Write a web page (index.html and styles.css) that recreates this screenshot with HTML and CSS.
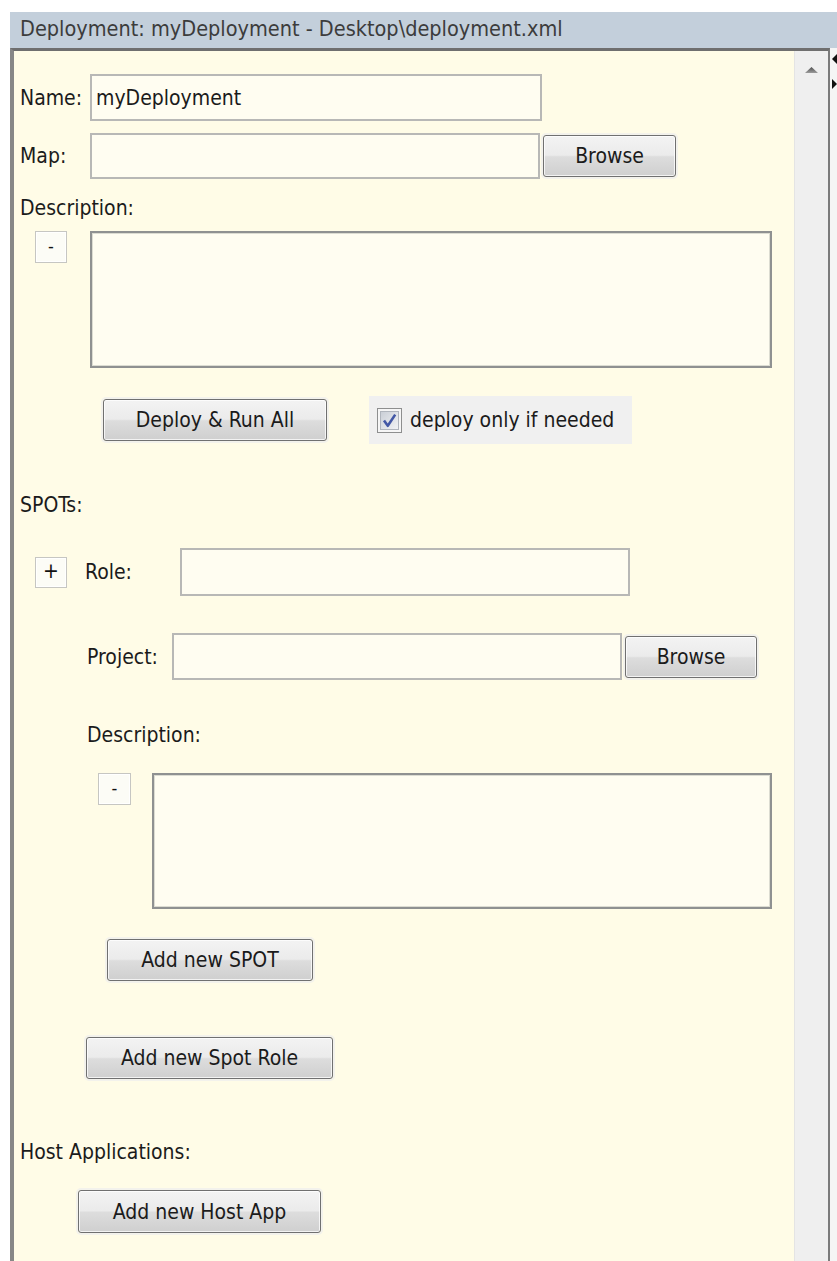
FILE: index.html
```html
<!DOCTYPE html>
<html lang="en">
<head>
<meta charset="utf-8">
<title>Deployment editor</title>
<link rel="stylesheet" href="styles.css">
</head>
<body>
<div class="window">
  <div class="titlebar">Deployment: myDeployment - Desktop\deployment.xml</div>
  <div class="split">
    <div class="scrollpane">
      <div class="content">
        <div class="row row-name">
          <label class="lbl" for="dep-name">Name:</label>
          <input class="field f-name" id="dep-name" type="text" value="myDeployment">
        </div>
        <div class="row row-map">
          <label class="lbl" for="dep-map">Map:</label>
          <input class="field f-map" id="dep-map" type="text" value="">
          <button class="btn btn-browse" type="button">Browse</button>
        </div>
        <div class="caption cap-desc">Description:</div>
        <div class="desc desc-main">
          <button class="toggle" type="button">-</button>
          <textarea class="area area-main"></textarea>
        </div>
        <div class="row actions">
          <button class="btn btn-deploy" type="button">Deploy &amp; Run All</button>
          <label class="check">
            <svg class="check-box" width="25" height="25" viewBox="0 0 25 25">
              <defs>
                <linearGradient id="cbfill" x1="0" y1="0" x2="1" y2="1">
                  <stop offset="0" stop-color="#c9ced6"/>
                  <stop offset="1" stop-color="#f3f4f6"/>
                </linearGradient>
              </defs>
              <rect x="0.5" y="0.5" width="24" height="24" fill="#f6f6f6" stroke="#8e8f8f"/>
              <rect x="3.5" y="3.5" width="18" height="18" fill="url(#cbfill)" stroke="#b0b5bd"/>
              <path d="M7 12.5 L10.8 17.8 L18.2 6.6" fill="none" stroke="#4358a6" stroke-width="2.6" stroke-linejoin="round"/>
            </svg>
            <span>deploy only if needed</span>
          </label>
        </div>

        <div class="caption cap-spots">SPOTs:</div>
        <div class="row row-role">
          <button class="toggle toggle-plus" type="button">+</button>
          <label class="lbl lbl-role" for="spot-role">Role:</label>
          <input class="field f-role" id="spot-role" type="text" value="">
        </div>
        <div class="row row-project">
          <label class="lbl lbl-project" for="spot-project">Project:</label>
          <input class="field f-project" id="spot-project" type="text" value="">
          <button class="btn btn-browse btn-browse2" type="button">Browse</button>
        </div>
        <div class="caption cap-desc2">Description:</div>
        <div class="desc desc-spot">
          <button class="toggle toggle-spot" type="button">-</button>
          <textarea class="area area-spot"></textarea>
        </div>
        <button class="btn btn-add-spot" type="button">Add new SPOT</button>
        <button class="btn btn-add-role" type="button">Add new Spot Role</button>

        <div class="caption cap-host">Host Applications:</div>
        <button class="btn btn-add-host" type="button">Add new Host App</button>
      </div>
      <div class="vscroll">
        <svg class="scroll-up" width="13" height="6" viewBox="0 0 13 6">
          <defs>
            <linearGradient id="upfill" x1="0" y1="0" x2="0" y2="1">
              <stop offset="0" stop-color="#4e4e4e"/>
              <stop offset="1" stop-color="#9c9c9c"/>
            </linearGradient>
          </defs>
          <polygon points="0,6 6.5,0 13,6" fill="url(#upfill)"/>
        </svg>
      </div>
    </div>
    <div class="divider">
      <svg class="arrow-left" width="7" height="10" viewBox="0 0 7 10"><polygon points="2,5 7,0 7,10" fill="#111"/></svg>
      <svg class="arrow-right" width="7" height="10" viewBox="0 0 7 10"><polygon points="2,0 7,5 2,10" fill="#111"/></svg>
    </div>
  </div>
</div>
</body>
</html>
```

FILE: styles.css
```css
* {
  box-sizing: border-box;
}

html,
body {
  margin: 0;
  padding: 0;
}

body {
  background: #ffffff;
  font-family: "DejaVu Sans Condensed", "DejaVu Sans", sans-serif;
  font-size: 21px;
  color: #1b1b1b;
  overflow: hidden;
}

.window {
  height: 1261px;
  padding: 12px 0 0 10px;
  display: flex;
  flex-direction: column;
}

/* editor tab header */
.titlebar {
  flex: none;
  height: 36px;
  line-height: 34px;
  padding-left: 10px;
  background: #c3cfdb;
  color: #3c3c3c;
  font-size: 21.5px;
  white-space: nowrap;
}

.split {
  flex: 1;
  display: flex;
  min-height: 0;
}

.scrollpane {
  width: 820px;
  display: flex;
  border-top: 3px solid #6f6f6f;
  border-left: 4px solid #878787;
  border-right: 2px solid #7b7b7b;
}

.content {
  width: 780px;
  flex: none;
  background: #fffce7;
  padding: 23px 0 0 6px;
  display: flex;
  flex-direction: column;
  align-items: flex-start;
}

.vscroll {
  flex: 1;
  background: #efefef;
  border-left: 1px solid #e4e4e4;
  display: flex;
  justify-content: center;
  align-items: flex-start;
  padding-top: 16px;
}

.divider {
  width: 7px;
  flex: none;
  background: #f5f5f5;
  display: flex;
  flex-direction: column;
  align-items: flex-end;
  padding-top: 6px;
}

.arrow-left,
.arrow-right {
  display: block;
}

.arrow-right {
  margin-top: 15px;
}

/* form rows */
.row {
  display: flex;
  align-items: center;
}

.lbl {
  width: 70px;
  flex: none;
}

.field {
  font: inherit;
  color: inherit;
  margin: 0;
  padding: 0 4px;
  border: 2px solid #b8b8b6;
  background: #fffdf1;
  outline: none;
  flex: none;
}

.f-name {
  width: 452px;
  height: 47px;
}

.row-map {
  margin-top: 12px;
}

.f-map {
  width: 450px;
  height: 46px;
}

.btn {
  font: inherit;
  color: #1b1b1b;
  margin: 0;
  padding: 0;
  height: 42px;
  flex: none;
  border: 1px solid #707070;
  border-radius: 3px;
  background: linear-gradient(#f3f3f3 0%, #ebebeb 48%, #dddddd 52%, #cfcfcf 100%);
  box-shadow: inset 0 0 0 1px rgba(255, 255, 255, 0.75), 0 0 0 2px rgba(238, 238, 238, 0.7);
}

.btn-browse {
  margin-left: 3px;
  width: 133px;
}

.caption {
  line-height: 24px;
}

.cap-desc {
  margin-top: 17px;
}

.desc {
  display: flex;
  align-items: flex-start;
  margin-top: 11px;
}

.toggle {
  font: inherit;
  font-size: 18px;
  color: #111;
  width: 32px;
  height: 32px;
  margin: 0 0 0 15px;
  padding: 0 0 3px;
  flex: none;
  background: #fcfcf6;
  border: 1px solid #c6c6c2;
  box-shadow: inset 0 0 0 1px #ffffff;
  line-height: 1;
}

.area {
  font: inherit;
  margin: 0;
  padding: 4px;
  resize: none;
  outline: none;
  flex: none;
  background: #fffdf1;
  border: 2px solid #8f9191;
  box-shadow: inset 0 0 0 1px #dcdcd2;
}

.area-main {
  margin-left: 23px;
  width: 682px;
  height: 137px;
}

.actions {
  margin-top: 28px;
  height: 48px;
}

.btn-deploy {
  margin-left: 83px;
  width: 224px;
}

.check {
  margin-left: 42px;
  width: 263px;
  height: 48px;
  background: #f0f0f0;
  display: flex;
  align-items: center;
  padding-left: 8px;
  gap: 8px;
}

.check-box {
  display: block;
  flex: none;
}

/* SPOT section */
.cap-spots {
  margin-top: 49px;
}

.row-role {
  margin-top: 31px;
}

.toggle-plus {
  height: 31px;
  font-size: 21px;
  padding: 0 0 2px;
}

.lbl-role {
  margin-left: 18px;
  width: 95px;
}

.f-role {
  width: 450px;
  height: 48px;
}

.row-project {
  margin-top: 37px;
}

.lbl-project {
  margin-left: 67px;
  width: 85px;
}

.f-project {
  width: 450px;
  height: 47px;
}

.btn-browse2 {
  width: 132px;
}

.cap-desc2 {
  margin-top: 43px;
  margin-left: 67px;
}

.desc-spot {
  margin-top: 26px;
}

.toggle-spot {
  margin-left: 78px;
  width: 33px;
}

.area-spot {
  margin-left: 21px;
  width: 620px;
  height: 136px;
}

.btn-add-spot {
  margin-top: 30px;
  margin-left: 87px;
  width: 206px;
}

.btn-add-role {
  margin-top: 56px;
  margin-left: 66px;
  width: 247px;
}

/* host applications */
.cap-host {
  margin-top: 61px;
}

.btn-add-host {
  margin-top: 26px;
  margin-left: 58px;
  width: 243px;
  height: 43px;
}
```
